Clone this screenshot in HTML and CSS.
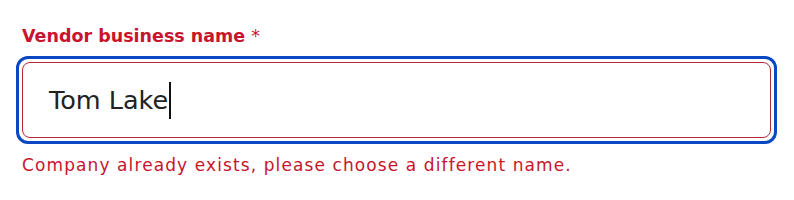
FILE: index.html
```html
<!DOCTYPE html>
<html>
<head>
<meta charset="utf-8">
<link rel="stylesheet" href="styles.css">
</head>
<body>
<div class="field">
  <div class="label">Vendor business name <span class="req">*</span></div>
  <div class="focus-ring">
    <div class="input"><span class="value">Tom Lake</span><span class="caret"></span></div>
  </div>
  <div class="error">Company already exists, please choose a different name.</div>
</div>
</body>
</html>
```
FILE: styles.css
```css
html, body {
  margin: 0;
  padding: 0;
  background: #ffffff;
}
body {
  font-family: "DejaVu Sans", "Open Sans", sans-serif;
}
.field {
  padding: 25px 17px 0 16px;
}
.label {
  padding-left: 6px;
  font-size: 17.5px;
  font-weight: bold;
  color: #c8142c;
  line-height: 22px;
  height: 31px;
}
.req {
  margin-left: 0;
  font-weight: normal;
}
.focus-ring {
  border: 3px solid #0a47c2;
  border-radius: 12px;
  padding: 3px;
}
.input {
  border: 1px solid #b3283a;
  border-radius: 8px;
  height: 74px;
  display: flex;
  align-items: center;
  padding-left: 26px;
  font-size: 25.5px;
  color: #222222;
}
.caret {
  display: inline-block;
  width: 2px;
  height: 37px;
  background: #111111;
  margin-left: 1px;
}
.error {
  padding-left: 6px;
  margin-top: 10px;
  font-size: 17px;
  letter-spacing: 1.1px;
  color: #c8142c;
  line-height: 22px;
}
```
